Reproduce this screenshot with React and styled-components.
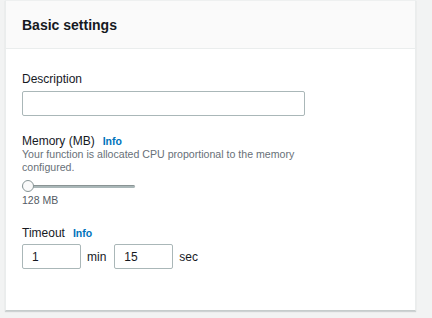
import React from "react";
import styled, { createGlobalStyle } from "styled-components";

const Global = createGlobalStyle`
  html, body { margin: 0; padding: 0; background: #f2f3f3; }
  body { font-family: "Liberation Sans", Arial, sans-serif; color: #16191f; }
`;

const Page = styled.div`
  width: 432px;
  height: 318px;
  padding-left: 5px;
  box-sizing: border-box;
`;

const Card = styled.section`
  width: 411px;
  height: 311px;
  box-sizing: border-box;
  background: #fff;
  border: 1px solid #eaeded;
  border-top-color: #eef0f0;
  border-bottom: 1px solid #c6cccc;
  box-shadow: 0 1px 1px rgba(0, 28, 36, 0.15);
  display: flex;
  flex-direction: column;
`;

const Header = styled.header`
  height: 48px;
  box-sizing: border-box;
  background: #fafafa;
  border-bottom: 1px solid #eaeded;
  display: flex;
  align-items: center;
  padding: 1px 16px 0;
`;

const Title = styled.h2`
  margin: 0;
  font-size: 14px;
  font-weight: 700;
  color: #16191f;
`;

const Body = styled.div`
  padding: 22px 16px 0;
  display: flex;
  flex-direction: column;
`;

const Field = styled.div`
  display: flex;
  flex-direction: column;
  margin-bottom: ${(p) => p.$mb || 0}px;
`;

const Label = styled.div`
  font-size: 12px;
  line-height: 16px;
  color: #16191f;
  display: flex;
  align-items: baseline;
  gap: 8px;
`;

const Info = styled.span`
  font-size: 10.5px;
  font-weight: 700;
  color: #0073bb;
`;

const Hint = styled.div`
  font-size: 10.6px;
  line-height: 13px;
  color: #687078;
  width: 280px;
  margin-top: -1px;
`;

const Spacer = styled.div`
  height: 4px;
`;

const TextInput = styled.div`
  box-sizing: border-box;
  width: ${(p) => p.$w}px;
  height: 25px;
  border: 1px solid #aab7b8;
  border-radius: 2px;
  background: #fff;
  font-size: 12px;
  display: flex;
  align-items: center;
  padding-left: 9px;
  color: #16191f;
`;

const Slider = styled.div`
  position: relative;
  width: 113px;
  height: 12px;
  display: flex;
  align-items: center;
  margin: 6px 0 1px;
`;

const Track = styled.div`
  width: 100%;
  height: 3px;
  border-radius: 2px;
  background: #aab7b8;
  border-top: 1px solid #8a9494;
  box-sizing: border-box;
`;

const Thumb = styled.div`
  position: absolute;
  left: 0;
  top: 0;
  width: 12px;
  height: 12px;
  box-sizing: border-box;
  border-radius: 50%;
  border: 1px solid #879596;
  background: #fafafa;
`;

const Small = styled.div`
  font-size: 10.5px;
  line-height: 14px;
  color: #545b64;
`;

const Row = styled.div`
  display: flex;
  align-items: center;
  margin-top: 3px;
`;

const Unit = styled.span`
  font-size: 12px;
  color: #16191f;
  margin: 0 ${(p) => p.$mr}px 0 6px;
`;

export default function App() {
  return (
    <>
      <Global />
      <Page>
        <Card>
          <Header>
            <Title>Basic settings</Title>
          </Header>
          <Body>
            <Field $mb={17}>
              <Label>Description</Label>
              <Spacer />
              <TextInput $w={283} />
            </Field>
            <Field $mb={18}>
              <Label>
                Memory (MB) <Info>Info</Info>
              </Label>
              <Hint>Your function is allocated CPU proportional to the memory configured.</Hint>
              <Slider>
                <Track />
                <Thumb />
              </Slider>
              <Small>128 MB</Small>
            </Field>
            <Field>
              <Label>
                Timeout <Info>Info</Info>
              </Label>
              <Row>
                <TextInput $w={59}>1</TextInput>
                <Unit $mr={8}>min</Unit>
                <TextInput $w={59}>15</TextInput>
                <Unit $mr={0}>sec</Unit>
              </Row>
            </Field>
          </Body>
        </Card>
      </Page>
    </>
  );
}
